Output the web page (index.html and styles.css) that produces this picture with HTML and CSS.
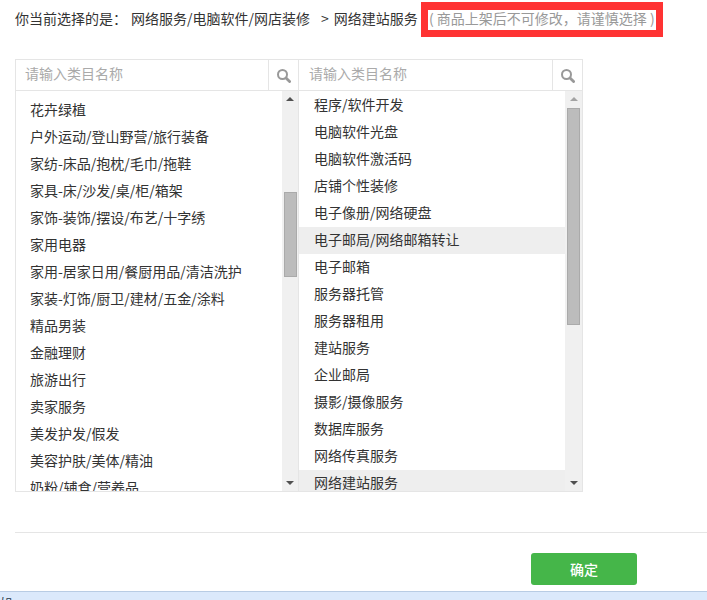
FILE: index.html
```html
<!DOCTYPE html>
<html lang="zh-CN">
<head>
	<meta charset="UTF-8">
	<meta name="viewport" content="width=device-width, initial-scale=1.0">
	<title>选择类目</title>
	<link rel="stylesheet" href="styles.css">
</head>
<body>
	<div class="current">
		<span class="current-label">你当前选择的是：</span>
		<span class="current-path">网络服务/电脑软件/网店装修</span>
		<span class="current-next">&gt;</span>
		<span class="current-leaf">网络建站服务</span>
		<span class="warn">( 商品上架后不可修改，请谨慎选择 )</span>
	</div>

	<div class="picker">
		<div class="col col-left">
			<div class="search">
				<span class="search-input">请输入类目名称</span>
				<span class="search-btn">
					<svg class="icon" viewBox="0 0 14 14"><circle cx="5.5" cy="5.5" r="4.5" fill="none" stroke="#999" stroke-width="2"/><path d="M9 9 L12.6 12.6" fill="none" stroke="#999" stroke-width="2.8" stroke-linecap="round"/></svg>
				</span>
			</div>
			<div class="body">
				<ul class="list list-left">
					<li>花卉绿植</li>
					<li>户外运动/登山野营/旅行装备</li>
					<li>家纺-床品/抱枕/毛巾/拖鞋</li>
					<li>家具-床/沙发/桌/柜/箱架</li>
					<li>家饰-装饰/摆设/布艺/十字绣</li>
					<li>家用电器</li>
					<li>家用-居家日用/餐厨用品/清洁洗护</li>
					<li>家装-灯饰/厨卫/建材/五金/涂料</li>
					<li>精品男装</li>
					<li>金融理财</li>
					<li>旅游出行</li>
					<li>卖家服务</li>
					<li>美发护发/假发</li>
					<li>美容护肤/美体/精油</li>
					<li>奶粉/辅食/营养品</li>
				</ul>
				<div class="scroll scroll-left">
					<span class="arrow arrow-up"></span>
					<span class="thumb"></span>
					<span class="arrow arrow-down"></span>
				</div>
			</div>
		</div>
		<div class="col col-right">
			<div class="search">
				<span class="search-input">请输入类目名称</span>
				<span class="search-btn">
					<svg class="icon" viewBox="0 0 14 14"><circle cx="5.5" cy="5.5" r="4.5" fill="none" stroke="#999" stroke-width="2"/><path d="M9 9 L12.6 12.6" fill="none" stroke="#999" stroke-width="2.8" stroke-linecap="round"/></svg>
				</span>
			</div>
			<div class="body">
				<ul class="list list-right">
					<li>程序/软件开发</li>
					<li>电脑软件光盘</li>
					<li>电脑软件激活码</li>
					<li>店铺个性装修</li>
					<li>电子像册/网络硬盘</li>
					<li class="on">电子邮局/网络邮箱转让</li>
					<li>电子邮箱</li>
					<li>服务器托管</li>
					<li>服务器租用</li>
					<li>建站服务</li>
					<li>企业邮局</li>
					<li>摄影/摄像服务</li>
					<li>数据库服务</li>
					<li>网络传真服务</li>
					<li class="on">网络建站服务</li>
				</ul>
				<div class="scroll scroll-right">
					<span class="arrow arrow-up"></span>
					<span class="thumb"></span>
					<span class="arrow arrow-down"></span>
				</div>
			</div>
		</div>
	</div>

	<div class="actions">
		<button class="ok">确定</button>
	</div>

	<div class="statusbar"><span class="statusbar-text">如</span></div>
</body>
</html>
```

FILE: styles.css
```css
html, body{
	margin: 0;
	height: 600px;
	overflow: hidden;
}

body{
	display: flex;
	flex-direction: column;
	background-color: #fff;
	font-family: "Noto Sans CJK SC", "Liberation Sans", sans-serif;
	font-size: 14px;
	color: #333;
}

.current{
	display: flex;
	align-items: flex-start;
	height: 35px;
	margin-top: 2px;
	padding-left: 15px;
	line-height: 32px;
	white-space: nowrap;
}

.current-path{
	margin-left: 4px;
}

.current-next{
	margin-left: 11px;
}

.current-leaf{
	margin-left: 5px;
}

.warn{
	box-sizing: border-box;
	width: 242px;
	height: 35px;
	margin-left: 3px;
	border: 7px solid #f33;
	border-top-width: 8px;
	line-height: 17px;
	color: #999;
	text-align: center;
}

.picker{
	display: flex;
	width: 568px;
	height: 433px;
	box-sizing: border-box;
	margin: 22px 0 0 15px;
	border: 1px solid #e5e5e5;
}

.col{
	display: flex;
	flex-direction: column;
	box-sizing: border-box;
	width: 283px;
}

.col-left{
	border-right: 1px solid #e5e5e5;
}

.search{
	display: flex;
	flex: none;
	height: 30px;
	border-bottom: 1px solid #e5e5e5;
}

.search-input{
	flex: 1;
	padding-left: 10px;
	line-height: 27px;
	color: #aaa;
}

.col-left .search-input{
	padding-left: 9px;
}

.search-btn{
	display: flex;
	justify-content: center;
	align-items: center;
	box-sizing: border-box;
	width: 30px;
	border-left: 1px solid #e5e5e5;
}

.icon{
	width: 14px;
	height: 14px;
	margin-top: 2px;
}

.body{
	display: flex;
	flex: 1;
	min-height: 0;
}

.list{
	flex: 1;
	margin: 0;
	padding: 0 0 0 14px;
	list-style: none;
	overflow: hidden;
}

.list-left{
	padding-top: 6px;
}

.list-right{
	padding-top: 1px;
	padding-left: 0;
}

.list li{
	height: 27px;
	line-height: 25px;
	white-space: nowrap;
}

.list-right li{
	padding-left: 15px;
}

.list-right .on{
	background-color: #eee;
}

.scroll{
	display: flex;
	flex: none;
	flex-direction: column;
	align-items: center;
	width: 16px;
	background-color: #f0f0f0;
}

.scroll-right{
	width: 17px;
}

.arrow{
	flex: none;
	width: 0;
	height: 0;
	border-left: 4px solid transparent;
	border-right: 4px solid transparent;
}

.arrow-up{
	margin-top: 6px;
	border-bottom: 4px solid #505050;
}

.arrow-down{
	margin-top: auto;
	margin-bottom: 6px;
	border-top: 4px solid #505050;
}

.thumb{
	flex: none;
	box-sizing: border-box;
	width: 13px;
	background-color: #bcbcbc;
	border: 1px solid #aaa;
}

.scroll-left .thumb{
	height: 85px;
	margin-top: 91px;
}

.scroll-right .arrow-up{
	border-bottom-color: #a3a3a3;
}

.scroll-right .thumb{
	height: 217px;
	margin-top: 7px;
}

.actions{
	display: flex;
	justify-content: flex-end;
	margin: 40px 0 0 15px;
	padding: 20px 70px 0 0;
	border-top: 1px solid #e5e5e5;
}

.ok{
	width: 106px;
	height: 32px;
	padding: 0;
	border: 0;
	border-radius: 3px;
	background-color: #45b649;
	font-family: inherit;
	font-size: 14px;
	font-weight: 500;
	color: #fff;
}

.statusbar{
	flex: none;
	height: 8px;
	margin-top: auto;
	border-top: 1px solid #b8cce4;
	background-color: #dbe9fb;
	overflow: hidden;
}

.statusbar-text{
	display: block;
	margin-top: 4px;
	font-size: 12px;
	line-height: 14px;
	color: #234;
}
```
